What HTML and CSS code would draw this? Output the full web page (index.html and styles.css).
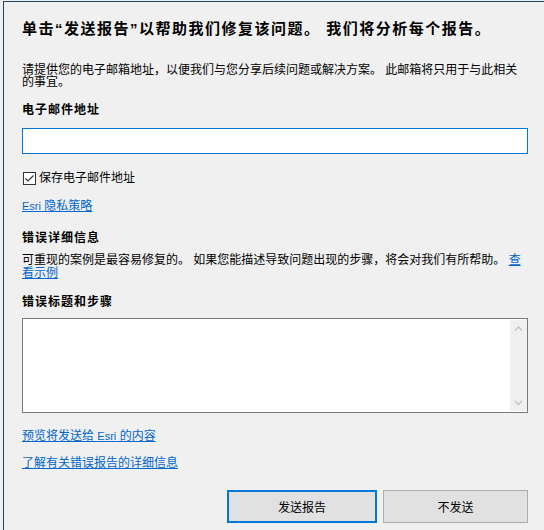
FILE: index.html
```html
<!DOCTYPE html>
<html lang="zh-CN">
<head>
<meta charset="utf-8">
<title>发送错误报告</title>
<link rel="stylesheet" href="styles.css">
</head>
<body>
<div class="window">
  <h1 class="title">单击“发送报告”以帮助我们修复该问题。 我们将分析每个报告。</h1>
  <p class="text intro">请提供您的电子邮箱地址，以便我们与您分享后续问题或解决方案。 此邮箱将只用于与此相关的事宜。</p>
  <div class="label l-email">电子邮件地址</div>
  <input class="email" type="text">
  <label class="check">
    <span class="box"><svg width="13" height="13" viewBox="0 0 13 13"><rect x="0.5" y="0.5" width="12" height="12" fill="#fff" stroke="#333"/><polyline points="2.5,6.5 5,9 10.5,3.5" fill="none" stroke="#333" stroke-width="1.2"/></svg></span>
    <span>保存电子邮件地址</span>
  </label>
  <a class="link l-privacy" href="#"><span class="en">Esri</span> 隐私策略</a>
  <div class="label l-details">错误详细信息</div>
  <p class="text desc">可重现的案例是最容易修复的。 如果您能描述导致问题出现的步骤，将会对我们有所帮助。 <a class="link inline" href="#">查看示例</a></p>
  <div class="label l-steps">错误标题和步骤</div>
  <div class="textbox">
    <textarea class="steps"></textarea>
    <div class="scrollbar">
      <span class="arrow"><svg width="17" height="17" viewBox="0 0 17 17"><polyline points="5,10.5 8.5,7 12,10.5" fill="none" stroke="#bfbfbf" stroke-width="1.3"/></svg></span>
      <span class="arrow"><svg width="17" height="17" viewBox="0 0 17 17"><polyline points="5,7 8.5,10.5 12,7" fill="none" stroke="#bfbfbf" stroke-width="1.3"/></svg></span>
    </div>
  </div>
  <a class="link l-preview" href="#">预览将发送给 <span class="en">Esri</span> 的内容</a>
  <a class="link l-learn" href="#">了解有关错误报告的详细信息</a>
  <div class="buttons">
    <button class="btn primary" type="button">发送报告</button>
    <button class="btn secondary" type="button">不发送</button>
  </div>
</div>
</body>
</html>
```
FILE: styles.css
```css
html, body {
  margin: 0;
  padding: 0;
  background: #f0f0f0;
}

body {
  font-family: "Liberation Sans", "Noto Sans CJK SC", sans-serif;
  font-size: 12px;
  color: #000;
  height: 530px;
  overflow: hidden;
}

.window {
  box-sizing: border-box;
  margin: 1px 0 0 3px;
  border-top: 1px solid #1b4b6e;
  border-left: 1px solid #1b4b6e;
  padding: 17px 16px 0 18px;
  height: 529px;
}

.title {
  margin: 0;
  font-size: 15px;
  line-height: 20px;
  font-weight: bold;
  letter-spacing: 1.5px;
  white-space: nowrap;
}

.text {
  margin: 0;
}

.intro {
  margin-top: 25px;
  line-height: 12px;
}

.desc {
  margin-top: 8px;
  line-height: 13px;
}

.label {
  font-weight: bold;
  line-height: 16px;
  letter-spacing: 1px;
}

.l-email { margin-top: 14px; }
.l-details { margin-top: 16px; }
.l-steps { margin-top: 14px; }

.email {
  display: block;
  box-sizing: border-box;
  width: 100%;
  height: 26px;
  margin: 10px 0 0;
  border: 1px solid #0078d7;
  background: #fff;
  outline: none;
  padding: 0 4px;
  font: inherit;
}

.check {
  display: flex;
  align-items: center;
  gap: 3px;
  height: 16px;
  margin-top: 16px;
  line-height: 16px;
}

.box {
  display: flex;
  width: 13px;
  height: 13px;
  margin-left: 1px;
}

.link {
  color: #0066cc;
  text-decoration: underline;
  text-underline-offset: 1px;
}

.l-privacy,
.l-preview,
.l-learn {
  display: block;
  width: fit-content;
  line-height: 16px;
}

.l-privacy { margin-top: 12px; }
.l-preview { margin-top: 15px; }
.l-learn { margin-top: 11px; }

.en {
  font-size: 11px;
}

.textbox {
  display: flex;
  box-sizing: border-box;
  height: 95px;
  margin-top: 8px;
  border: 1px solid #7a7a7a;
  background: #fff;
}

.steps {
  flex: 1;
  border: none;
  outline: none;
  resize: none;
  background: #fff;
  margin: 0;
  padding: 2px 4px;
  font: inherit;
  overflow: hidden;
}

.scrollbar {
  width: 17px;
  margin: 1px 0;
  background: #f0f0f0;
  display: flex;
  flex-direction: column;
  justify-content: space-between;
}

.arrow {
  display: flex;
  width: 17px;
  height: 17px;
}

.buttons {
  display: flex;
  justify-content: flex-end;
  gap: 6px;
  margin-top: 19px;
}

.btn {
  box-sizing: border-box;
  height: 33px;
  background: #e1e1e1;
  font: inherit;
  color: #000;
  padding: 0;
  margin: 0;
}

.primary {
  width: 150px;
  border: 2px solid #0078d7;
}

.secondary {
  width: 145px;
  border: 1px solid #adadad;
}
```
